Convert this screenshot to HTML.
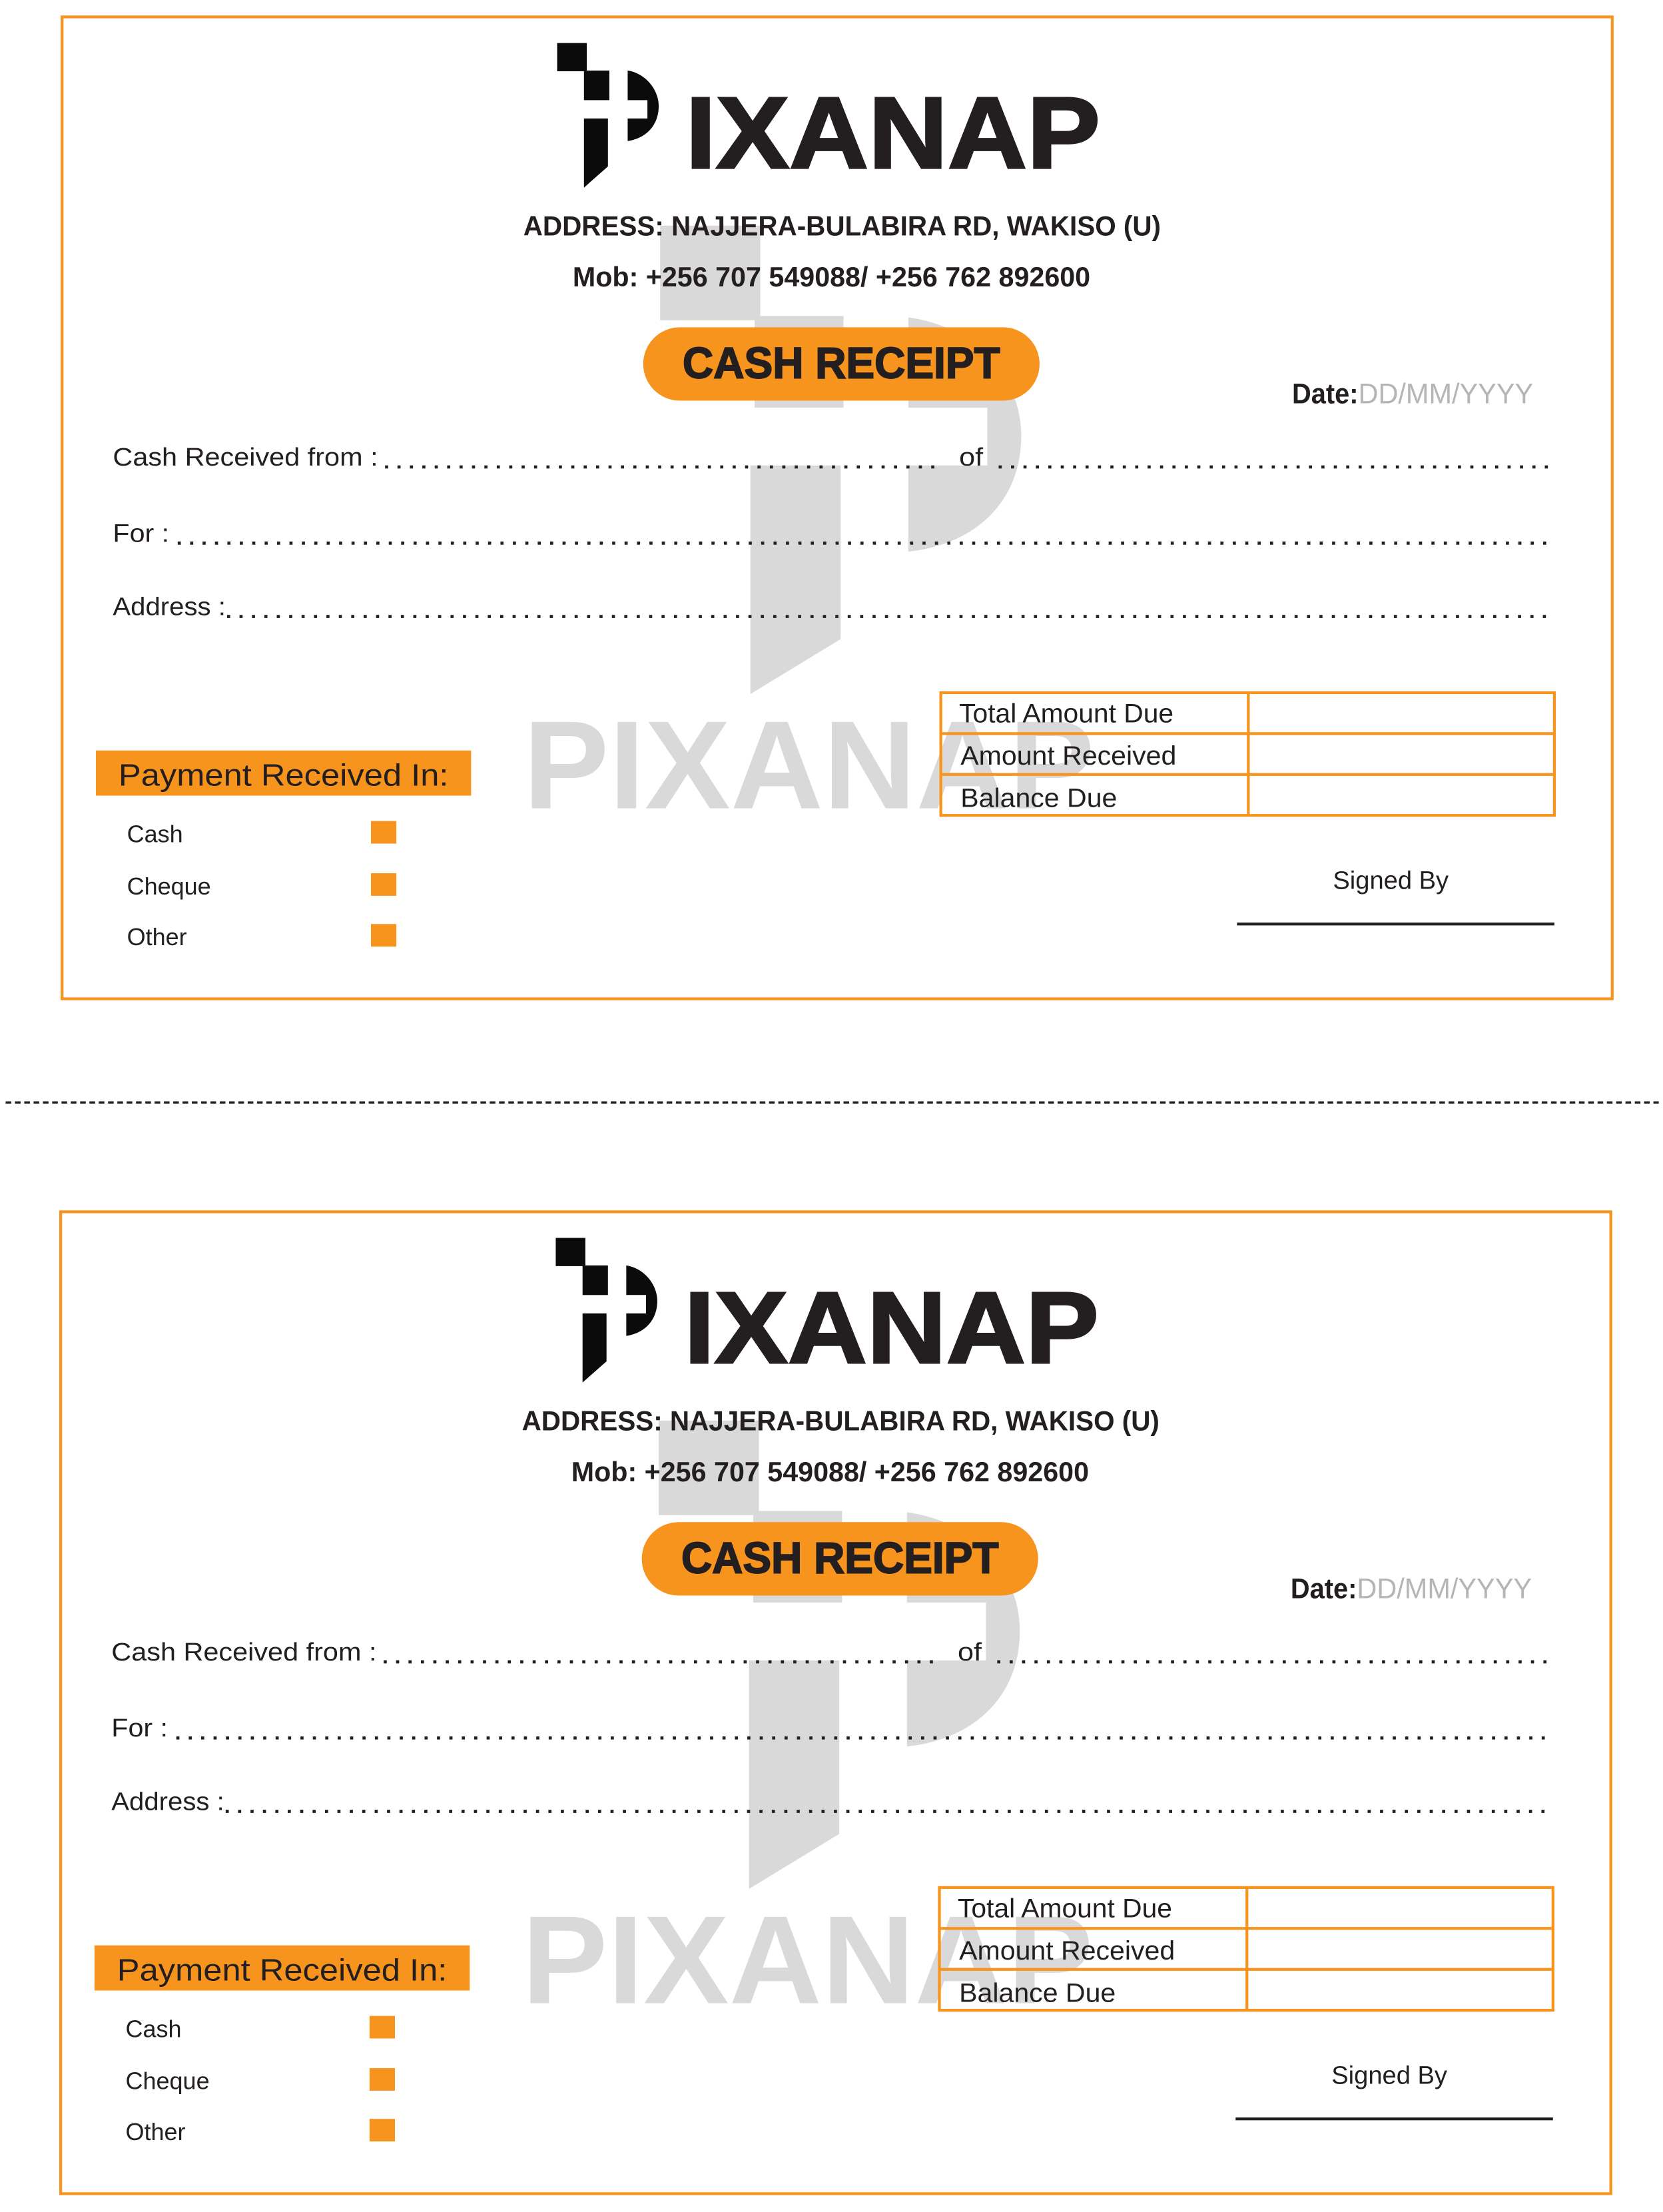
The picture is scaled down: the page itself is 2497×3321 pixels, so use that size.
<!DOCTYPE html>
<html><head><meta charset="utf-8"><style>
html,body{margin:0;padding:0;background:#fff;}
svg{display:block;}
text{font-family:"Liberation Sans",Arial,sans-serif;}
</style></head><body>
<svg width="2497" height="3321" viewBox="0 0 1179 1568" preserveAspectRatio="none" xmlns="http://www.w3.org/2000/svg">
<defs>
<g id="rc">
  <g fill="#d9d9d9">
    <rect x="468" y="160" width="71" height="67"/>
    <rect x="535" y="224" width="63" height="65"/>
    <path d="M532 330 H596 V453 L532 492 Z"/>
    <path d="M644 225 C695 232 724 270 724 309 C724 355 692 386 644 391 V330 H700 V289 H644 Z"/>
    <text x="371" y="573" font-size="89" font-weight="bold" textLength="405" lengthAdjust="spacingAndGlyphs">PIXANAP</text>
  </g>
  <rect x="44" y="12" width="1099" height="696" fill="none" stroke="#f7941d" stroke-width="2"/>
  <g fill="#0b0b0b">
    <rect x="395" y="30.5" width="21" height="20"/>
    <rect x="414" y="50" width="18" height="21"/>
    <path d="M414 84 H431 V118 L414 133 Z"/>
    <path d="M445 50 C458 52 467 64 467 75 C467 89 458 98 445 100 V84 H459 V71 H445 Z"/>
  </g>
  <text x="486" y="119" font-size="72" font-weight="bold" fill="#231f20" stroke="#231f20" stroke-width="1.5" textLength="294" lengthAdjust="spacingAndGlyphs">IXANAP</text>
  <text x="371" y="167" font-size="19.5" font-weight="bold" fill="#231f20" textLength="452" lengthAdjust="spacingAndGlyphs">ADDRESS: NAJJERA-BULABIRA RD, WAKISO (U)</text>
  <text x="406" y="203" font-size="19.5" font-weight="bold" fill="#231f20" textLength="367" lengthAdjust="spacingAndGlyphs">Mob: +256 707 549088/ +256 762 892600</text>
  <rect x="456" y="232" width="281" height="52" rx="26" fill="#f7941d"/>
  <text x="484" y="268" font-size="31" font-weight="bold" fill="#231f20" stroke="#231f20" stroke-width="0.9" textLength="225" lengthAdjust="spacingAndGlyphs">CASH RECEIPT</text>
  <text x="916" y="286" font-size="20" fill="#231f20" font-weight="bold" textLength="47" lengthAdjust="spacingAndGlyphs">Date:</text>
  <text x="963" y="286" font-size="20" fill="#b5b5b5" textLength="124" lengthAdjust="spacingAndGlyphs">DD/MM/YYYY</text>
  <g fill="#231f20" font-size="18">
    <text x="80" y="330" textLength="188" lengthAdjust="spacingAndGlyphs">Cash Received from :</text>
    <text x="680" y="330" textLength="17" lengthAdjust="spacingAndGlyphs">of</text>
    <text x="80" y="384" textLength="40" lengthAdjust="spacingAndGlyphs">For :</text>
    <text x="80" y="436" textLength="80" lengthAdjust="spacingAndGlyphs">Address :</text>
  </g>
  <g stroke="#231f20" stroke-width="2.2" stroke-dasharray="2.2 6.6">
    <line x1="273" y1="331" x2="665" y2="331"/>
    <line x1="708" y1="331" x2="1100" y2="331"/>
    <line x1="126" y1="385" x2="1100" y2="385"/>
    <line x1="161" y1="437" x2="1100" y2="437"/>
  </g>
  <g fill="none" stroke="#f7941d" stroke-width="2">
    <rect x="667" y="491" width="435" height="87"/>
    <line x1="667" y1="520" x2="1102" y2="520"/>
    <line x1="667" y1="549" x2="1102" y2="549"/>
    <line x1="885" y1="491" x2="885" y2="578"/>
  </g>
  <g fill="#231f20" font-size="19">
    <text x="680" y="512" textLength="152" lengthAdjust="spacingAndGlyphs">Total Amount Due</text>
    <text x="681" y="542" textLength="153" lengthAdjust="spacingAndGlyphs">Amount Received</text>
    <text x="681" y="572" textLength="111" lengthAdjust="spacingAndGlyphs">Balance Due</text>
  </g>
  <rect x="68" y="532" width="266" height="32" fill="#f7941d"/>
  <text x="84" y="557" font-size="22" fill="#231f20" textLength="234" lengthAdjust="spacingAndGlyphs">Payment Received In:</text>
  <g fill="#231f20" font-size="17">
    <text x="90" y="597">Cash</text>
    <text x="90" y="634">Cheque</text>
    <text x="90" y="670">Other</text>
  </g>
  <g fill="#f7941d">
    <rect x="263" y="582" width="18" height="16"/>
    <rect x="263" y="619" width="18" height="16"/>
    <rect x="263" y="655" width="18" height="16"/>
  </g>
  <text x="986" y="630" font-size="18" fill="#231f20" text-anchor="middle">Signed By</text>
  <rect x="877" y="654" width="225" height="2" fill="#231f20"/>
</g>
</defs>
<use href="#rc"/>
<use href="#rc" transform="translate(-1,847)"/>
<line x1="4" y1="781.5" x2="1176" y2="781.5" stroke="#231f20" stroke-width="1.6" stroke-dasharray="4 2.6"/>
</svg>
</body></html>
